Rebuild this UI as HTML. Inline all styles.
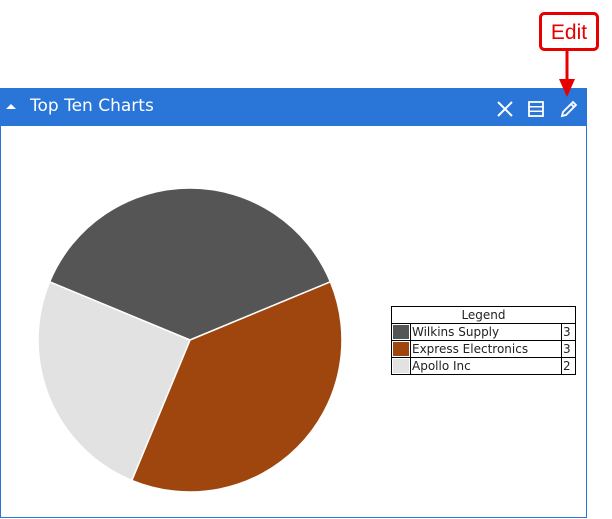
<!DOCTYPE html>
<html><head><style>
body{margin:0;width:612px;height:519px;background:#fff;position:relative;overflow:hidden;font-family:"Liberation Sans",sans-serif}
.panel{position:absolute;left:0;top:88px;width:585px;height:429px;border:1px solid #2a76d8;border-top:none;box-sizing:content-box}
.hdr{position:absolute;left:0;top:88px;width:587px;height:38px;background:#2a76d8;color:#fff}
.hdr .t{position:absolute;left:30px;top:8px;font-family:"DejaVu Sans",sans-serif;font-size:17px}
table{position:absolute;left:391px;top:306px;border-collapse:collapse;font-family:"DejaVu Sans",sans-serif;font-size:12px;color:#222}
td{border:1px solid #000;height:16px;padding:0 1px;line-height:16px}
</style></head><body>
<div class="panel"></div>
<div class="hdr"><svg style="position:absolute;left:6px;top:15px" width="10" height="7"><polygon points="0,6 5,1 10,6" fill="#fff"/></svg><span class="t">Top Ten Charts</span>
<svg style="position:absolute;left:496px;top:12px" width="84" height="18" fill="none" stroke="#fff" stroke-width="2">
<path d="M2,2 L16,16 M16,2 L2,16"/>
<rect x="33" y="2" width="14" height="14" stroke-width="1.8"/><path d="M33,6.7H47M33,11.3H47" stroke-width="1.5"/>
<path d="M66,16 L67,12 L77,2 L80,5 L70,15 Z M75,4 L78,7" stroke-width="1.8"/>
</svg></div>
<svg style="position:absolute;left:0;top:0" width="612" height="519">
<rect x="540.5" y="13.5" width="57" height="36" rx="4" fill="#fff" stroke="#e60000" stroke-width="3"/>
<text x="569" y="39" text-anchor="middle" font-size="21" fill="#e60000" font-family="Liberation Sans">Edit</text>
<path d="M567,50 V80" stroke="#e60000" stroke-width="3"/>
<polygon points="559,79 575,79 567,97" fill="#e60000"/>
<g stroke="#fff" stroke-width="1.5">
<path d="M190,340 L49.6,281.8 A152,152 0 0 1 330.4,281.8 Z" fill="#555"/>
<path d="M190,340 L330.4,281.8 A152,152 0 0 1 131.8,480.4 Z" fill="#9e460d"/>
<path d="M190,340 L131.8,480.4 A152,152 0 0 1 49.6,281.8 Z" fill="#e2e2e2"/>
</g></svg>
<table>
<tr><td colspan="3" style="text-align:center;width:180px">Legend</td></tr>
<tr><td style="width:16px;background:#555;box-shadow:inset 0 0 0 1px #fff"></td><td style="width:148px">Wilkins Supply</td><td style="width:11px">3</td></tr>
<tr><td style="background:#9e460d;box-shadow:inset 0 0 0 1px #fff"></td><td>Express Electronics</td><td>3</td></tr>
<tr><td style="background:#e2e2e2;box-shadow:inset 0 0 0 1px #fff"></td><td>Apollo Inc</td><td>2</td></tr>
</table>
</body></html>
